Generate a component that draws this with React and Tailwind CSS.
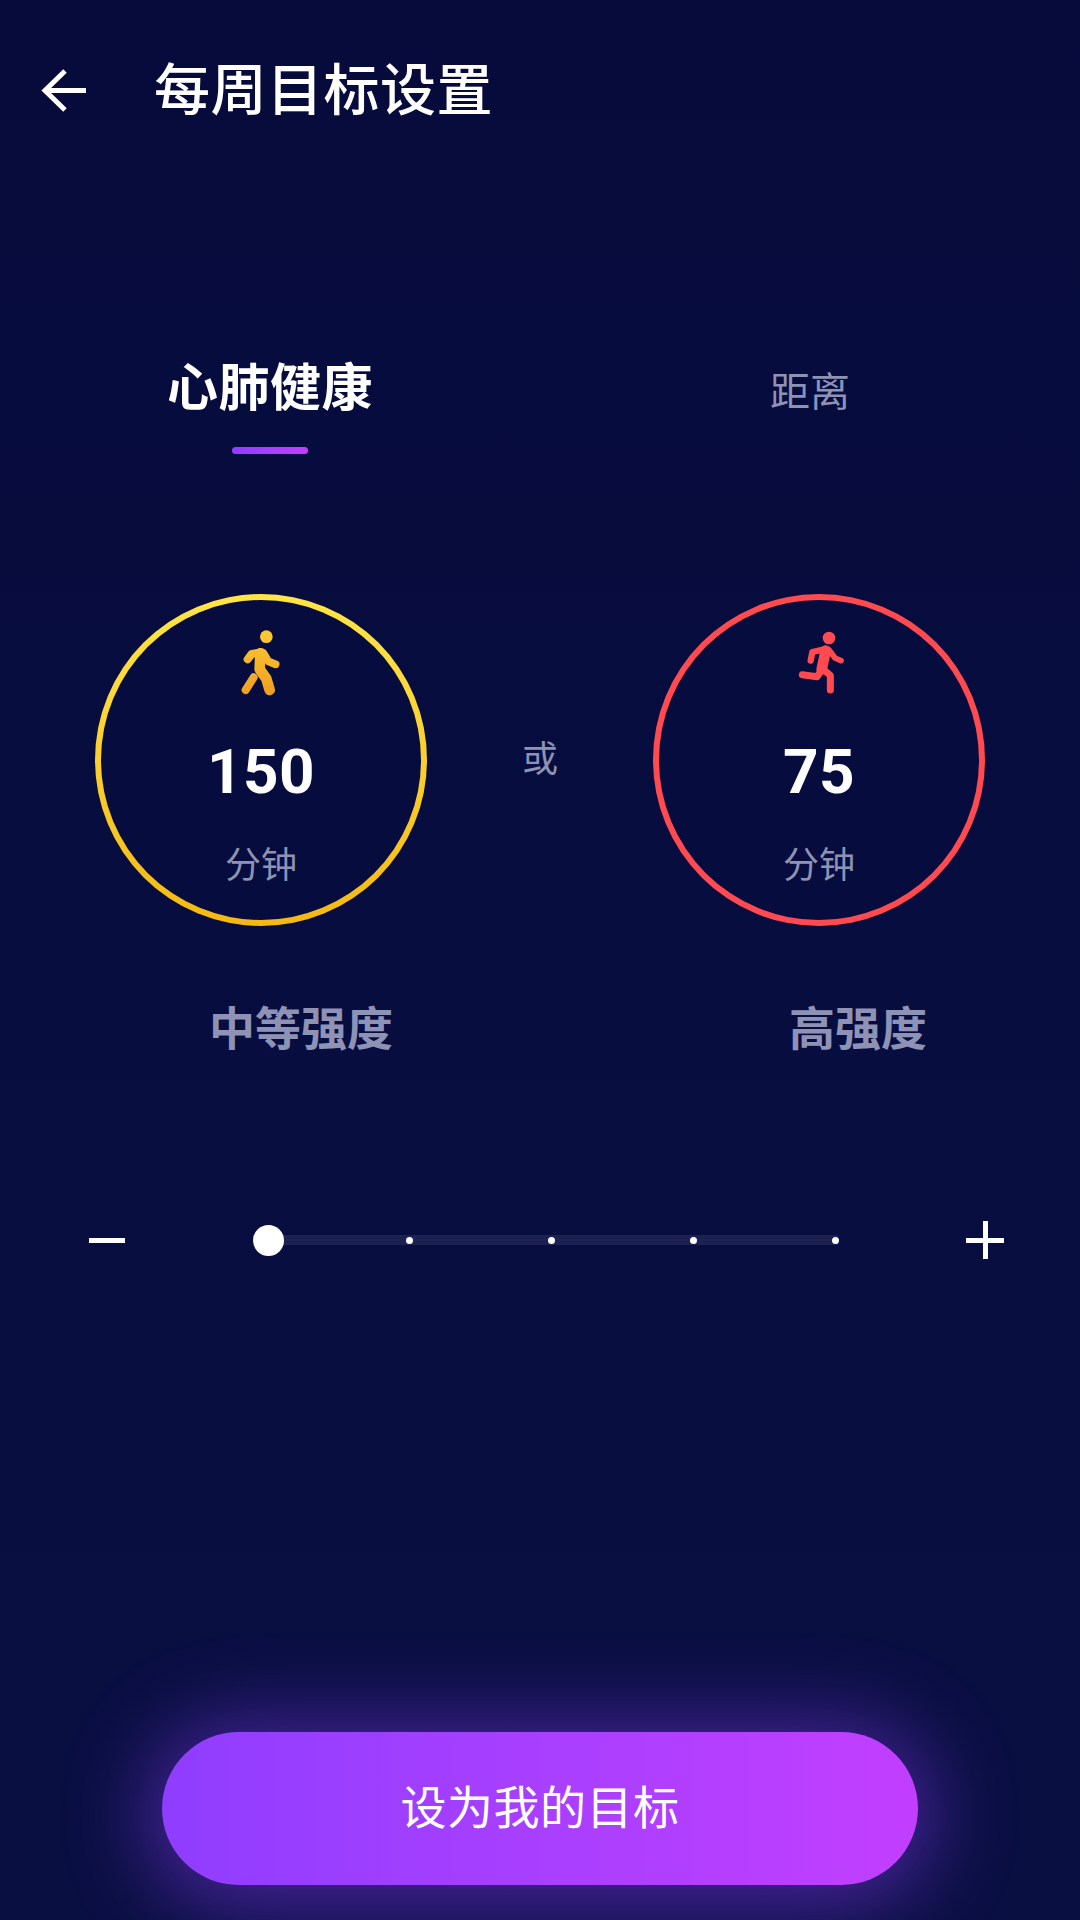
const WalkIcon = () => (
  <svg viewBox="0 0 240 240" className="w-20 h-20">
    <defs>
      <linearGradient id="walk" x1="0" y1="30" x2="0" y2="220" gradientUnits="userSpaceOnUse">
        <stop offset="0" stopColor="#fbcb35" />
        <stop offset="1" stopColor="#f0a022" />
      </linearGradient>
    </defs>
    <g transform="translate(-4 0)">
      <circle cx="140" cy="50" r="19" fill="url(#walk)" />
      <g fill="none" stroke="url(#walk)" strokeLinecap="round" strokeLinejoin="round">
        <path d="M125 97 L96 102 L84 118" strokeWidth="24" />
        <path d="M132 100 L146 124 L168 133" strokeWidth="23" />
        <path d="M122 100 L120 148 L140 176 L150 210" strokeWidth="32" />
        <path d="M102 172 L78 210" strokeWidth="24" />
      </g>
    </g>
  </svg>
);

const RunIcon = () => (
  <svg viewBox="0 0 240 240" className="w-20 h-20">
    <g transform="translate(4 0)" fill="none" stroke="#ff4b4f" strokeLinejoin="round" strokeLinecap="round">
      <circle cx="146" cy="54" r="19" fill="#ff4b4f" stroke="none" />
      <path d="M132 88 L96 96 L91 122" strokeWidth="19" />
      <path d="M146 90 L164 114 L182 122" strokeWidth="17" />
      <path d="M136 92 L124 148" strokeWidth="32" />
      <path d="M124 150 L110 170 L66 164" strokeWidth="21" />
      <path d="M126 146 L150 166 L150 210" strokeWidth="21" />
    </g>
  </svg>
);

function Ring({ ringClass, icon, value }) {
  return (
    <div className={`w-[332px] h-[332px] rounded-full p-[6px] shrink-0 ${ringClass}`}>
      <div className="w-full h-full rounded-full bg-[#070c3e] flex flex-col items-center pt-[20px]">
        {icon}
        <div className="mt-[34px] text-[62px] leading-[76px] font-bold tracking-[0.5px] text-white">{value}</div>
        <div className="mt-[31px] text-[36px] leading-[50px] text-[#8e92b4]">分钟</div>
      </div>
    </div>
  );
}

export default function App() {
  const stops = [0, 1, 2, 3];

  return (
    <div className="w-[1080px] h-[1920px] overflow-hidden flex flex-col bg-linear-to-b from-[#060b3c] to-[#0a0f42] text-white font-['Roboto','Noto_Sans_CJK_SC',sans-serif]">
      {/* Header */}
      <div className="flex items-center h-[182px] pl-[40px]">
        <svg viewBox="0 0 48 48" className="w-12 h-12" fill="none" stroke="white" strokeWidth="5">
          <path d="M46 23.5 L6 23.5" />
          <path d="M25 4 L5 23.5 L25 43" />
        </svg>
        <h1 className="ml-[66px] text-[56px] leading-[80px] font-medium tracking-[0.5px]">每周目标设置</h1>
      </div>

      {/* Tabs */}
      <div className="grid grid-cols-2 mt-[170px]">
        <div className="flex flex-col items-center">
          <div className="text-[51px] leading-[74px] font-bold tracking-[0.5px]">心肺健康</div>
          <div className="mt-[21px] w-[76px] h-[7px] rounded-full bg-linear-to-r from-[#8f3dff] to-[#c23eff]" />
        </div>
        <div className="text-[40px] leading-[74px] text-[#8e92b4] text-center pt-[4px]">距离</div>
      </div>

      {/* Rings */}
      <div className="flex items-center mt-[140px] pl-[95px]">
        <Ring ringClass="bg-linear-to-b from-[#ffe545] to-[#f4b90f]" icon={<WalkIcon />} value="150" />
        <div className="w-[226px] text-center text-[36px] text-[#8e92b4]">或</div>
        <Ring ringClass="bg-[#ff4b4f]" icon={<RunIcon />} value="75" />
      </div>

      {/* Intensity labels */}
      <div className="flex mt-[70px] text-[46px] leading-[66px] font-bold text-[#8e92b4]">
        <div className="ml-[209px]">中等强度</div>
        <div className="ml-[396px]">高强度</div>
      </div>

      {/* Slider */}
      <div className="flex items-center h-[40px] mt-[158px]">
        <div className="ml-[89px] w-[36px] h-[5px] bg-white" />
        <div className="ml-[128px] w-[31px] h-[31px] rounded-full bg-white shrink-0 z-10" />
        <div className="w-[555px] h-[10px] -ml-[1px] bg-[#1c2152] flex items-center pl-[123px] gap-[135px]">
          {stops.map((s) => (
            <div key={s} className="shrink-0 w-[7px] h-[7px] rounded-full bg-white" />
          ))}
        </div>
        <div className="ml-[128px] w-[38px] h-[38px] flex items-center justify-center relative">
          <div className="w-[38px] h-[5px] bg-white" />
          <div className="absolute w-[5px] h-[38px] bg-white" />
        </div>
      </div>

      {/* Button */}
      <div className="mt-auto mb-[35px] flex justify-center">
        <button className="w-[756px] h-[153px] rounded-full bg-linear-to-r from-[#8f3dff] to-[#c23eff] text-[46px] tracking-[0.5px] text-white shadow-[0_6px_80px_18px_rgba(143,61,255,0.45)]">
          设为我的目标
        </button>
      </div>
    </div>
  );
}
